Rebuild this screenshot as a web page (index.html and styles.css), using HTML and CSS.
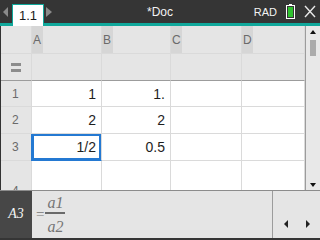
FILE: index.html
```html
<!DOCTYPE html>
<html lang="en">
<head>
    <meta charset="UTF-8">
    <title>*Doc</title>
    <link rel="stylesheet" href="styles.css">
</head>
<body>
    <div class="screen">
        <div class="topbar">
            <div class="tabs">
                <span class="arrow left"></span>
                <div class="tab">1.1</div>
                <span class="arrow right"></span>
            </div>
            <div class="title">*Doc</div>
            <div class="status">
                <span class="rad">RAD</span>
                <svg class="battery" width="9" height="15" viewBox="0 0 9 15">
                    <rect x="3" y="0" width="3" height="2" fill="#fff"/>
                    <rect x="0.5" y="1.5" width="8" height="13" fill="none" stroke="#fff"/>
                    <rect x="2" y="3" width="5" height="10" fill="#2fc12f"/>
                </svg>
                <svg class="close" width="12" height="13" viewBox="0 0 12 13">
                    <path d="M1 1 L11 12 M11 1 L1 12" stroke="#e8e8e8" stroke-width="1.4"/>
                </svg>
            </div>
        </div>

        <div class="sheet">
            <div class="grid">
                <div class="cell corner"></div>
                <div class="cell colhead"><span class="letter">A</span></div>
                <div class="cell colhead"><span class="letter">B</span></div>
                <div class="cell colhead"><span class="letter">C</span></div>
                <div class="cell colhead"><span class="letter">D</span></div>

                <div class="cell formula-head"><span class="eq-icon"></span></div>
                <div class="cell formula"></div>
                <div class="cell formula"></div>
                <div class="cell formula"></div>
                <div class="cell formula"></div>

                <div class="cell rowhead">1</div>
                <div class="cell num">1</div>
                <div class="cell num">1.</div>
                <div class="cell"></div>
                <div class="cell"></div>

                <div class="cell rowhead">2</div>
                <div class="cell num">2</div>
                <div class="cell num">2</div>
                <div class="cell"></div>
                <div class="cell"></div>

                <div class="cell rowhead">3</div>
                <div class="cell num selected">1/2</div>
                <div class="cell num">0.5</div>
                <div class="cell"></div>
                <div class="cell"></div>

                <div class="cell rowhead">4</div>
                <div class="cell"></div>
                <div class="cell"></div>
                <div class="cell"></div>
                <div class="cell"></div>
            </div>
            <div class="scrollbar">
                <span class="tri up"></span>
                <span class="thumb"></span>
                <span class="tri down"></span>
            </div>
        </div>

        <div class="entry">
            <div class="cellref">A3</div>
            <div class="expr">
                <span class="equals">=</span>
                <span class="frac">
                    <span class="numer">a1</span>
                    <span class="denom">a2</span>
                </span>
            </div>
            <div class="nav">
                <span class="tri left"></span>
                <span class="tri right"></span>
            </div>
        </div>
    </div>
</body>
</html>
```

FILE: styles.css
```css
* {
    box-sizing: border-box;
    margin: 0;
    padding: 0;
}

body {
    font-family: "Liberation Sans", Arial, sans-serif;
    width: 320px;
    height: 240px;
    overflow: hidden;
    background: #fff;
}

.screen {
    width: 320px;
    height: 240px;
    display: flex;
    flex-direction: column;
}

/* top bar */
.topbar {
    height: 26px;
    display: grid;
    grid-template-columns: 1fr auto 1fr;
    align-items: end;
    background: linear-gradient(to bottom, #353535 0, #353535 23px, #10a89b 23px);
}

.tabs {
    display: flex;
    align-items: flex-end;
    padding-left: 3px;
}

.arrow {
    width: 0;
    height: 0;
    border-top: 5px solid transparent;
    border-bottom: 5px solid transparent;
    margin-bottom: 9px;
}

.arrow.left {
    border-right: 5px solid #8a8a8a;
    margin-right: 4px;
}

.arrow.right {
    border-left: 6px solid #8a8a8a;
    margin-left: 2px;
}

.tab {
    width: 32px;
    height: 22px;
    background: #fff;
    border: 1px solid #10a89b;
    border-bottom: none;
    color: #1a1a1a;
    font-size: 13px;
    text-align: center;
    line-height: 21px;
}

.title {
    color: #f2f2f2;
    font-size: 12px;
    align-self: center;
    padding-bottom: 3px;
}

.status {
    display: flex;
    justify-content: flex-end;
    align-items: center;
    align-self: start;
    height: 23px;
    padding-right: 4px;
}

.rad {
    color: #f2f2f2;
    font-size: 11px;
    margin-right: 9px;
}

.battery {
    margin-right: 9px;
}

/* spreadsheet */
.sheet {
    display: flex;
    height: 164px;
}

.grid {
    width: 305px;
    height: 164px;
    overflow: hidden;
    border-left: 1px solid #333;
    display: grid;
    grid-template-columns: 31px 70px 69px 71px 63px;
    grid-template-rows: 28px 27px 26px 27px 27px 60px;
}

.cell {
    border-right: 1px solid #dadada;
    border-bottom: 1px solid #dadada;
    background: #fff;
    display: flex;
    align-items: center;
}

.corner,
.colhead,
.formula-head,
.formula,
.rowhead {
    background: #e5e5e5;
}

.formula-head,
.formula {
    border-bottom: 1px solid #9c9c9c;
}

.colhead {
    align-items: stretch;
}

.letter {
    width: 11px;
    background: #d6d6d6;
    color: #6a6a6a;
    font-size: 12px;
    display: flex;
    align-items: center;
    padding-left: 1px;
}

.eq-icon {
    width: 10px;
    height: 9px;
    margin-left: 10px;
    border-top: 3px solid #8c8c8c;
    border-bottom: 3px solid #8c8c8c;
}

.rowhead {
    color: #6a6a6a;
    font-size: 12px;
    padding-left: 11px;
}

.num {
    justify-content: flex-end;
    padding-right: 5px;
    color: #1e1e1e;
    font-size: 14px;
}

.selected {
    box-shadow: inset 0 0 0 2px #2479d2, -1px 0 0 #2479d2;
    border-bottom-color: #2479d2;
}

.scrollbar {
    width: 15px;
    background: #e8e8e8;
    border-left: 1px solid #9c9c9c;
    display: flex;
    flex-direction: column;
    align-items: center;
    padding-top: 4px;
}

.tri {
    width: 0;
    height: 0;
}

.tri.up {
    border-left: 3px solid transparent;
    border-right: 3px solid transparent;
    border-bottom: 4px solid #111;
}

.tri.down {
    border-left: 3px solid transparent;
    border-right: 3px solid transparent;
    border-top: 4px solid #111;
    margin-top: auto;
    margin-bottom: 3px;
}

.thumb {
    width: 6px;
    height: 16px;
    background: #ababab;
    margin-top: 6px;
}

/* entry line */
.entry {
    height: 50px;
    display: flex;
    border-top: 1px solid #8c8c8c;
    border-bottom: 2px solid #353535;
    background: #e5e5e5;
}

.cellref {
    width: 32px;
    background: #474747;
    color: #f4f4f4;
    font-family: "Liberation Serif", serif;
    font-style: italic;
    font-size: 14px;
    display: flex;
    align-items: center;
    justify-content: center;
    padding-bottom: 2px;
}

.expr {
    flex: 1;
    display: flex;
    align-items: center;
    padding-left: 4px;
    color: #757575;
    font-family: "Liberation Serif", serif;
    font-style: italic;
    font-size: 16px;
}

.equals {
    font-style: normal;
    font-size: 15px;
    margin-right: 1px;
}

.frac {
    display: inline-flex;
    flex-direction: column;
    align-items: center;
    width: 20px;
}

.numer {
    line-height: 17px;
    padding-bottom: 1px;
}

.denom {
    line-height: 17px;
    border-top: 2px solid #6a6a6a;
    width: 20px;
    text-align: center;
    padding-top: 4px;
}

.nav {
    width: 48px;
    border-left: 1px solid #9c9c9c;
    display: flex;
    align-items: flex-end;
    justify-content: space-between;
    padding: 0 10px 10px 11px;
}

.tri.left {
    border-top: 4px solid transparent;
    border-bottom: 4px solid transparent;
    border-right: 4px solid #222;
}

.tri.right {
    border-top: 4px solid transparent;
    border-bottom: 4px solid transparent;
    border-left: 4px solid #222;
}
```
